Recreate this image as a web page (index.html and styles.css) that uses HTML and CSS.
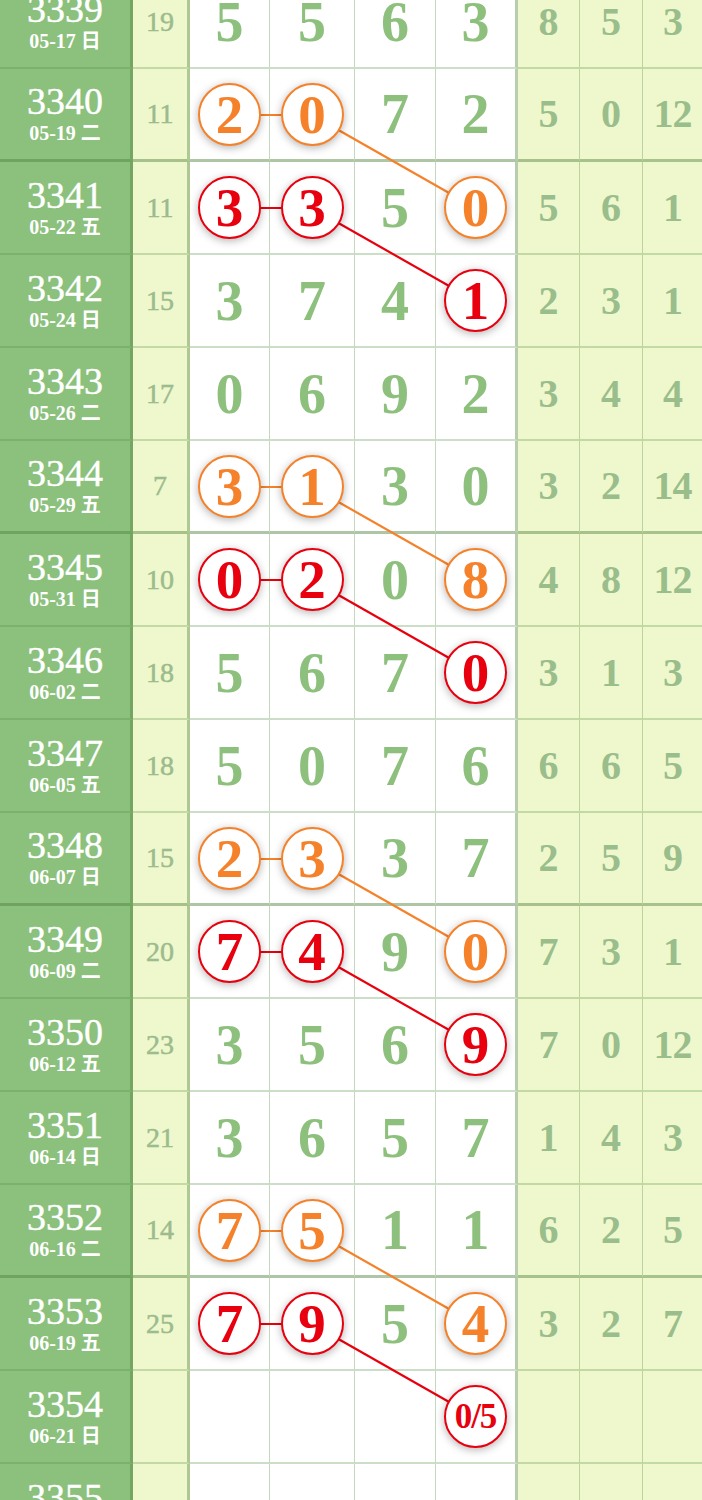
FILE: index.html
```html
<!DOCTYPE html>
<html lang="zh">
<head>
  <meta charset="UTF-8">
  <meta name="viewport" content="width=device-width, initial-scale=1.0">
  <title>走势图</title>
  <link rel="stylesheet" href="styles.css">
</head>
<body>
  <div class="board" id="board">
    <svg class="links" id="links" width="702" height="1581"></svg>
  </div>

  <script>
    // period, date, sum, four digits, three spans
    const draws = [
      ['3339', '05-17 日', '19', ['5', '5', '6', '3'], ['8', '5', '3']],
      ['3340', '05-19 二', '11', ['2', '0', '7', '2'], ['5', '0', '12']],
      ['3341', '05-22 五', '11', ['3', '3', '5', '0'], ['5', '6', '1']],
      ['3342', '05-24 日', '15', ['3', '7', '4', '1'], ['2', '3', '1']],
      ['3343', '05-26 二', '17', ['0', '6', '9', '2'], ['3', '4', '4']],
      ['3344', '05-29 五', '7', ['3', '1', '3', '0'], ['3', '2', '14']],
      ['3345', '05-31 日', '10', ['0', '2', '0', '8'], ['4', '8', '12']],
      ['3346', '06-02 二', '18', ['5', '6', '7', '0'], ['3', '1', '3']],
      ['3347', '06-05 五', '18', ['5', '0', '7', '6'], ['6', '6', '5']],
      ['3348', '06-07 日', '15', ['2', '3', '3', '7'], ['2', '5', '9']],
      ['3349', '06-09 二', '20', ['7', '4', '9', '0'], ['7', '3', '1']],
      ['3350', '06-12 五', '23', ['3', '5', '6', '9'], ['7', '0', '12']],
      ['3351', '06-14 日', '21', ['3', '6', '5', '7'], ['1', '4', '3']],
      ['3352', '06-16 二', '14', ['7', '5', '1', '1'], ['6', '2', '5']],
      ['3353', '06-19 五', '25', ['7', '9', '5', '4'], ['3', '2', '7']],
      ['3354', '06-21 日', '', ['', '', '', '0/5'], ['', '', '']],
      ['3355', '06-23 二', '', ['', '', '', ''], ['', '', '']]
    ];

    const ROW_H = 93;
    const CENTER_X = [229.5, 312, 475.5];
    const COLORS = { orange: '#f5822a', red: '#e8000e' };

    // rows 1,5,9.. start an orange pick, rows 2,6,10.. a red one
    function pickColor(i) {
      if (i % 4 === 1) return 'orange';
      if (i % 4 === 2) return 'red';
      return null;
    }

    function makeCell(cls, html) {
      const div = document.createElement('div');
      div.className = 'cell ' + cls;
      div.innerHTML = html;
      return div;
    }

    function ball(value, color) {
      const small = value.length > 1 ? ' ball-small' : '';
      return `<span class="ball ball-${color}${small}">${value}</span>`;
    }

    const board = document.getElementById('board');
    const links = document.getElementById('links');

    function addLine(x1, y1, x2, y2, color) {
      const line = document.createElementNS('http://www.w3.org/2000/svg', 'line');
      line.setAttribute('x1', x1);
      line.setAttribute('y1', y1);
      line.setAttribute('x2', x2);
      line.setAttribute('y2', y2);
      line.setAttribute('stroke', COLORS[color]);
      line.setAttribute('stroke-width', 2.2);
      links.appendChild(line);
    }

    draws.forEach((d, i) => {
      const [period, date, sum, digits, spans] = d;
      const row = document.createElement('div');
      row.className = 'row' + (i % 4 === 1 ? ' row-group' : '');

      row.appendChild(makeCell('period',
        `<span class="period-no">${period}</span><span class="period-date">${date}</span>`));
      row.appendChild(makeCell('sum', sum));

      const pair = pickColor(i);
      const tail = pickColor(i - 1);
      digits.forEach((n, k) => {
        let html = n;
        if (pair && k < 2) html = ball(n, pair);
        if (tail && k === 3) html = ball(n, tail);
        row.appendChild(makeCell('num num-' + (k + 1), html));
      });

      spans.forEach((s, k) => {
        row.appendChild(makeCell('span span-' + (k + 1), s));
      });

      board.appendChild(row);

      if (pair) {
        const cy = i * ROW_H + 46;
        addLine(CENTER_X[0], cy, CENTER_X[1], cy, pair);
        addLine(CENTER_X[1], cy, CENTER_X[2], cy + ROW_H, pair);
      }
    });
  </script>
</body>
</html>
```

FILE: styles.css
```css
body {
  margin: 0;
  overflow: hidden;
  background: #fff;
  font-family: 'Liberation Serif', 'Noto Sans CJK SC', serif;
}
.board {
  position: relative;
  width: 702px;
  margin-top: -24px;
}
.links {
  position: absolute;
  top: 0;
  left: 0;
  z-index: 1;
  pointer-events: none;
}
.row {
  display: grid;
  grid-template-columns: 133px 57px 80px 85px 81px 82px 62px 63px 59px;
  height: 93px;
}
.cell {
  box-sizing: border-box;
  display: flex;
  align-items: center;
  justify-content: center;
  border-bottom: 2px solid rgba(80, 140, 60, 0.28);
  border-right: 1px solid rgba(80, 140, 60, 0.33);
  line-height: 1;
}
.row-group .cell {
  border-bottom: 3px solid rgba(80, 130, 60, 0.45);
}
.period {
  flex-direction: column;
  background: #8cc07d;
  color: #fff;
  border-right: 3px solid rgba(70, 120, 50, 0.35);
  padding-bottom: 1px;
}
.period-no {
  font-size: 38px;
  line-height: 36px;
  font-weight: 500;
  -webkit-text-stroke: 0.4px #fff;
}
.period-date {
  margin-top: 3px;
  font-size: 20px;
  font-weight: bold;
  line-height: 22px;
}
.sum {
  background: #eff8cc;
  color: #9cbb8e;
  font-size: 28px;
  -webkit-text-stroke: 0.5px #9cbb8e;
  border-right: 3px solid rgba(80, 130, 60, 0.4);
}
.num {
  background: #fff;
  color: #8dc07c;
  font-size: 56px;
  font-weight: bold;
}
.num-4 {
  border-right: 3px solid rgba(80, 130, 60, 0.4);
}
.span {
  background: #eff8cc;
  color: #9abd8c;
  font-size: 40px;
  font-weight: bold;
}
.span-3 {
  border-right: none;
  letter-spacing: -1px;
}
.ball {
  position: relative;
  z-index: 2;
  box-sizing: border-box;
  width: 63px;
  height: 63px;
  border-radius: 50%;
  border: 2px solid;
  background: #fff;
  display: flex;
  align-items: center;
  justify-content: center;
  font-size: 55px;
  box-shadow: 0 2px 8px rgba(0, 0, 0, 0.3);
}
.ball-orange {
  color: #f5822a;
  border-color: #f5822a;
}
.ball-red {
  color: #e8000e;
  border-color: #e8000e;
}
.ball-small {
  font-size: 35px;
  letter-spacing: -1px;
}
```
